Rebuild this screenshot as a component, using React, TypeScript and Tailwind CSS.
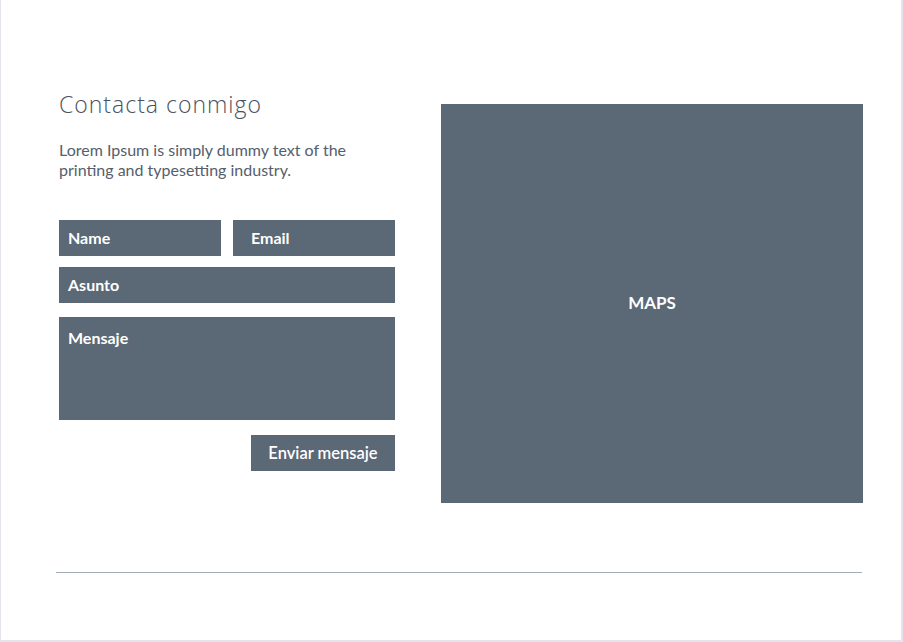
import React from 'react';

const field = 'bg-[#5b6876] text-white font-bold text-[16px] h-9 flex items-center';

export default function App() {
  return (
    <div className="w-[903px] h-[642px] bg-white" style={{ fontFamily: 'Lato, "Liberation Sans", sans-serif' }}>
      <div className="w-[903px] h-[642px] border-l border-r-2 border-b-2 border-[#e3e4ee] flex flex-col">
        {/* Top: form + map */}
        <div className="flex pt-[104px] pl-[58px] gap-[46px]">
          {/* Left: contact form */}
          <div className="w-[336px] flex flex-col -mt-[16px]">
            <h1 className="text-[23px] font-light text-[#4a5261] leading-8 tracking-[1px]" style={{ fontFamily: '"Open Sans", sans-serif' }}>
              Contacta conmigo
            </h1>
            <p className="mt-[20px] w-[300px] text-[16px] leading-5 text-[#555e6b]">
              Lorem Ipsum is simply dummy text of the printing and typesetting industry.
            </p>

            <div className="mt-[40px] flex gap-3">
              <div className={`${field} w-[162px] px-[9px]`}>Name</div>
              <div className={`${field} w-[162px] px-[18px]`}>Email</div>
            </div>
            <div className={`${field} mt-[11px] px-[9px]`}>Asunto</div>
            <div className="bg-[#5b6876] text-white font-bold text-[16px] h-[103px] mt-[14px] px-[9px] pt-[9px]">Mensaje</div>

            <div className="flex justify-end mt-[15px]">
              <div className={`${field} w-[144px] justify-center`}>
                <span className="font-semibold text-[16.5px]">Enviar mensaje</span>
              </div>
            </div>
          </div>

          {/* Right: map placeholder */}
          <div className="w-[422px] h-[399px] bg-[#5b6876] flex items-center justify-center text-white font-bold text-[17px] pb-[2px]">
            MAPS
          </div>
        </div>

        {/* Divider */}
        <div className="mt-[69px] ml-[55px] w-[806px] h-px bg-[#a3abb5]" />
      </div>
    </div>
  );
}
